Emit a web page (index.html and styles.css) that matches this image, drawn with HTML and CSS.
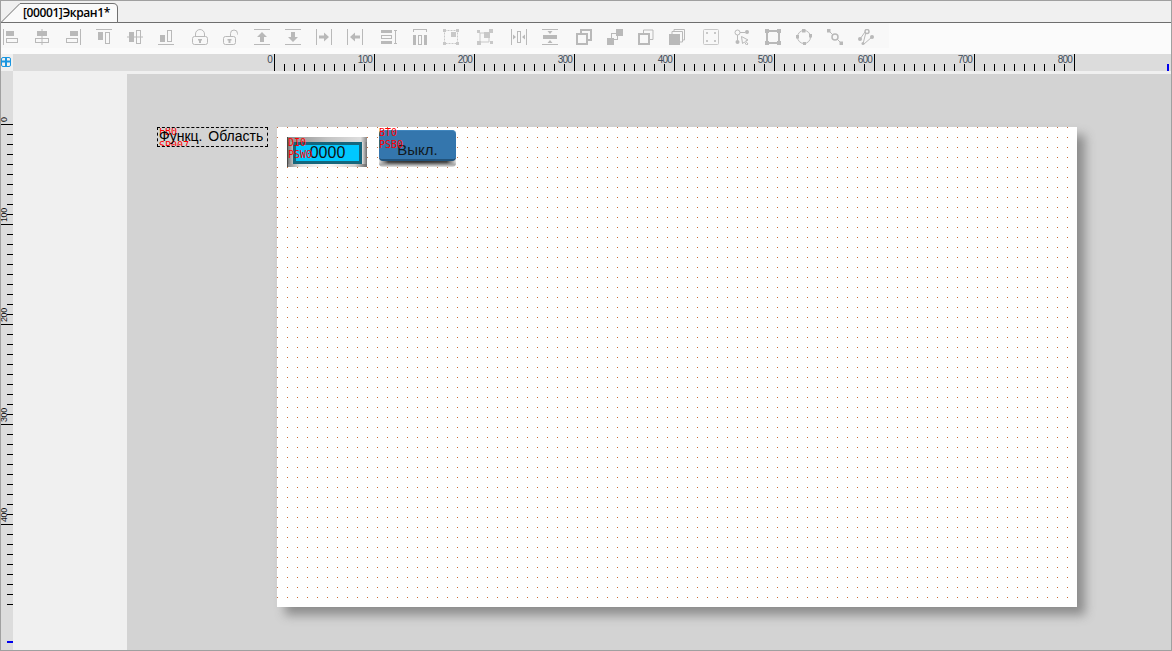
FILE: index.html
```html
<!DOCTYPE html>
<html lang="ru">
<head>
  <meta charset="UTF-8">
  <title>Экран1</title>
  <link rel="stylesheet" href="styles.css">
</head>
<body>

<div class="window">

  <div class="tabbar">
    <div class="tab">
      <svg class="tab-shape" width="118" height="22" viewBox="0 0 118 22">
        <path d="M0 21.5 L19 2.5 H112 Q116.500 2.500 116.500 7 V21.500 H0 Z"/>
      </svg>
      <span class="tab-title">[00001]Экран1*</span>
    </div>
  </div>

  <div class="toolbar">
    <div class="tools">
      <svg class="ico" viewBox="0 0 16 16"><rect x="0" y="0" width="1" height="16"/><rect x="3" y="2" width="8" height="5"/><rect class="ol" x="3.500" y="9.500" width="11" height="4"/></svg>
      <svg class="ico" viewBox="0 0 16 16"><rect x="7.500" y="0" width="1" height="16"/><rect x="3" y="2" width="10" height="5"/><rect class="ol" x="1.500" y="9.500" width="13" height="4"/></svg>
      <svg class="ico" viewBox="0 0 16 16"><rect x="15" y="0" width="1" height="16"/><rect x="5" y="2" width="8" height="5"/><rect class="ol" x="1.500" y="9.500" width="11" height="4"/></svg>
      <svg class="ico" viewBox="0 0 16 16"><rect x="0" y="0" width="16" height="1"/><rect x="2" y="3" width="5" height="8"/><rect class="ol" x="9.500" y="3.500" width="4" height="11"/></svg>
      <svg class="ico" viewBox="0 0 16 16"><rect x="0" y="7.500" width="16" height="1"/><rect x="2" y="3" width="5" height="10"/><rect class="ol" x="9.500" y="1.500" width="4" height="13"/></svg>
      <svg class="ico" viewBox="0 0 16 16"><rect x="0" y="15" width="16" height="1"/><rect x="2" y="6" width="5" height="7"/><rect class="ol" x="9.500" y="1.500" width="4" height="11"/></svg>

      <svg class="ico sep" viewBox="0 0 16 16"><rect class="ol" x="0.500" y="7.500" width="15" height="8" rx="2"/><path class="ol" d="M3.500 7.500 V5 A4.500 4.500 0 0 1 12.500 5 V7.500"/><rect x="7" y="10" width="2" height="4"/><rect x="6" y="10" width="4" height="1.500"/></svg>
      <svg class="ico" viewBox="0 0 16 16"><rect class="ol" x="0.500" y="7.500" width="12" height="8" rx="2"/><path class="ol" d="M7.500 7.500 V4.500 A3.500 3.500 0 0 1 14.500 4.500 V5.500"/><rect x="5.500" y="10" width="2" height="4"/><rect x="4.500" y="10" width="4" height="1.500"/></svg>
      <svg class="ico" viewBox="0 0 16 16"><rect x="0" y="0" width="16" height="1"/><rect x="0" y="15" width="16" height="1"/><path d="M8 3 L13 8 H10 V13 H6 V8 H3 Z"/></svg>
      <svg class="ico" viewBox="0 0 16 16"><rect x="0" y="0" width="16" height="1"/><rect x="0" y="15" width="16" height="1"/><path d="M8 13 L3 8 H6 V3 H10 V8 H13 Z"/></svg>
      <svg class="ico" viewBox="0 0 16 16"><rect x="0" y="0" width="1" height="16"/><rect x="15" y="0" width="1" height="16"/><path d="M13 8 L8 3.500 V6.500 H3 V9.500 H8 V12.500 Z"/></svg>
      <svg class="ico" viewBox="0 0 16 16"><rect x="0" y="0" width="1" height="16"/><rect x="15" y="0" width="1" height="16"/><path d="M3 8 L8 3.500 V6.500 H13 V9.500 H8 V12.500 Z"/></svg>

      <svg class="ico sep" viewBox="0 0 16 16"><rect x="0" y="1" width="11" height="3"/><rect class="ol" x="0.500" y="6.500" width="10" height="3"/><rect x="0" y="12" width="11" height="3"/><path d="M13 1 H16 V2 H15 V14 H16 V15 H13 V14 H14 V2 H13 Z"/></svg>
      <svg class="ico" viewBox="0 0 16 16"><path d="M1 0 V3 H2 V1 H14 V3 H15 V0 Z"/><rect x="1" y="6" width="3" height="10"/><rect class="ol" x="6.500" y="6.500" width="3" height="9"/><rect x="12" y="6" width="3" height="10"/></svg>
      <svg class="ico faint" viewBox="0 0 16 16"><rect class="ol dash" x="1.500" y="1.500" width="13" height="13"/><rect x="8" y="3" width="5" height="5"/><rect x="0" y="0" width="3" height="3"/><rect x="13" y="0" width="3" height="3"/><rect x="0" y="13" width="3" height="3"/><rect x="13" y="13" width="3" height="3"/></svg>

      <svg class="ico sep faint" viewBox="0 0 16 16"><path class="ol" d="M3 4 H12 V13 H3 Z"/><rect x="7" y="3" width="6" height="6"/><rect x="0" y="12" width="4" height="4"/><rect x="12" y="0" width="4" height="4"/><rect x="0" y="1" width="3" height="3"/><rect x="13" y="12" width="3" height="3"/></svg>
      <svg class="ico sep" viewBox="0 0 16 16"><rect x="0" y="0" width="1" height="16"/><rect x="15" y="0" width="1" height="16"/><rect class="ol" x="6.500" y="2.500" width="3" height="11"/><path d="M5 8 L2 5.500 V10.500 Z M11 8 L14 5.500 V10.500 Z"/></svg>
      <svg class="ico" viewBox="0 0 16 16"><rect x="0" y="0" width="16" height="1"/><rect x="0" y="15" width="16" height="1"/><rect x="1" y="6" width="14" height="4"/><path d="M8 5 L5.500 2 H10.500 Z M8 11 L5.500 14 H10.500 Z"/></svg>

      <svg class="ico sep" viewBox="0 0 16 16"><path class="ol2" d="M5 5 V1 H15 V11 H11"/><rect class="ol2" x="1" y="5" width="10" height="10"/></svg>
      <svg class="ico" viewBox="0 0 16 16"><rect x="9" y="0" width="7" height="7"/><rect class="ol" x="4.500" y="4.500" width="6" height="6"/><rect x="0" y="9" width="7" height="7"/></svg>
      <svg class="ico" viewBox="0 0 16 16"><path class="ol" d="M5.500 4 V1 H15 V10.500 H12"/><rect class="ol2" x="1" y="5" width="10" height="10"/></svg>
      <svg class="ico" viewBox="0 0 16 16"><path class="ol" d="M5 3 V0.500 H15.500 V11 H13"/><path class="ol" d="M3 5 V2.500 H13.500 V13 H11"/><rect x="0" y="5" width="11" height="11"/></svg>

      <svg class="ico sep faint" viewBox="0 0 16 16"><rect class="ol" x="0.500" y="0.500" width="15" height="15" rx="1"/><rect x="3" y="3" width="2" height="2"/><rect x="11" y="3" width="2" height="2"/><rect x="3" y="11" width="2" height="2"/><rect x="11" y="11" width="2" height="2"/></svg>
      <svg class="ico" viewBox="0 0 16 16"><circle class="ol" cx="3.500" cy="3.500" r="2.500"/><circle cx="13" cy="3" r="2"/><path class="ol" d="M6 3.500 H11 M3.500 6 V11"/><circle cx="3.500" cy="13" r="2"/><path class="ol" d="M7.500 7.500 L14 11 L11.500 12 L14 15 L12.500 16 L10.500 13 L8.500 14.500 Z"/></svg>
      <svg class="ico" viewBox="0 0 16 16"><rect class="ol2" x="2" y="2" width="12" height="12"/><rect x="0" y="0" width="4" height="4"/><rect x="12" y="0" width="4" height="4"/><rect x="0" y="12" width="4" height="4"/><rect x="12" y="12" width="4" height="4"/></svg>
      <svg class="ico" viewBox="0 0 16 16"><circle class="ol" cx="8" cy="8" r="6.500"/><rect x="6" y="0" width="3.500" height="3.500"/><rect x="13" y="5" width="3" height="3.500"/><rect x="0" y="6" width="3" height="3.500"/><rect x="7" y="13" width="3" height="3"/></svg>
      <svg class="ico" viewBox="0 0 16 16"><path class="ol" d="M1 1 L15 15"/><circle class="ol3" cx="8" cy="8" r="3"/><rect x="0" y="0" width="3.500" height="3.500"/><rect x="12.500" y="12.500" width="3.500" height="3.500"/></svg>
      <svg class="ico" viewBox="0 0 16 16"><path class="ol" d="M2 10 L7 3 M14 8 L6 15 M8 3 L5 15"/><circle class="ol3" cx="9" cy="2.500" r="2"/><circle cx="2" cy="10" r="2"/><circle cx="14" cy="8" r="2"/><circle cx="5" cy="14.500" r="1.500"/></svg>
    </div>
  </div>

  <div class="hruler-row">
    <div class="corner">
      <svg class="corner-mark" width="10" height="10" viewBox="0 0 10 10"><path d="M0.500 2 Q0.500 0.500 2 0.500 H8 Q9.500 0.500 9.500 2 V8 Q9.500 9.500 8 9.500 H2 Q0.500 9.500 0.500 8 Z"/><path class="corner-bar" d="M0 4.500 H10 M5 0 V10"/></svg>
    </div>
    <div class="hruler">
      <div class="htrack">
        <div class="hlabels">
          <span>0</span><span>100</span><span>200</span><span>300</span><span>400</span><span>500</span><span>600</span><span>700</span><span>800</span>
        </div>
      </div>
      <i class="hmark"></i>
    </div>
  </div>

  <div class="workspace">
    <div class="vruler">
      <div class="vtrack">
        <div class="vlabels">
          <span>0</span><span>100</span><span>200</span><span>300</span><span>400</span>
        </div>
      </div>
      <i class="vmark"></i>
    </div>

    <div class="stage">
      <div class="func-area">
        <div class="tag-lines">FB0<br>SP007</div>
        <span>Функц. Область</span>
      </div>

      <div class="page">
        <div class="num-box">
          <div class="num-field">0000</div>
          <div class="tag-lines">DI0<br>PSW0</div>
        </div>

        <div class="btn-box">
          <div class="btn-face">Выкл.</div>
          <div class="btn-base"></div>
          <div class="tag-lines">BT0<br>PSB0</div>
        </div>
      </div>
    </div>
  </div>

</div>

</body>
</html>
```

FILE: styles.css
```css
* {
  box-sizing: border-box;
}

html, body {
  margin: 0;
  height: 100%;
  overflow: hidden;
}

body {
  font-family: 'Liberation Sans', Arial, sans-serif;
  background: #f0f0f0;
}

.window {
  display: flex;
  flex-direction: column;
  width: 1172px;
  height: 651px;
  border: 1px solid #a0a0a0;
  background: #f0f0f0;
}

/* tabs */
.tabbar {
  height: 22px;
  border-bottom: 1px solid #6e6e6e;
  background: #f0f0f0;
}

.tab {
  position: relative;
  width: 118px;
  height: 22px;
  padding: 5px 0 0 22px;
  font-family: 'Open Sans', sans-serif;
  font-size: 12px;
  font-weight: 600;
  line-height: 14px;
  color: #000;
}

.tab-shape {
  position: absolute;
  top: 0;
  left: 0;
}

.tab-shape path {
  fill: #fafafa;
  stroke: #707070;
  stroke-width: 1;
}

.tab-title {
  position: relative;
  letter-spacing: -0.4px;
}

/* toolbar */
.toolbar {
  height: 31px;
  background: #fbfbfb;
}

.tools {
  display: flex;
  align-items: flex-start;
  gap: 15px;
  width: 888px;
  height: 25px;
  padding: 6px 0 0 2px;
  background: #f8f8f8;
}

.ico {
  flex: none;
  width: 16px;
  height: 16px;
  fill: #b9b9b9;
}

.ico.faint {
  opacity: 0.75;
}

.ico.sep {
  margin-left: 3px;
}

.ol, .ol2, .ol3 {
  fill: none;
  stroke: #b9b9b9;
  stroke-width: 1;
}

.ol2 {
  stroke-width: 2;
}

.ol3 {
  fill: #f8f8f8;
  stroke-width: 1.500;
}

.dash {
  stroke-dasharray: 2 1;
}

/* rulers */
.hruler-row {
  display: flex;
  height: 17px;
}

.corner {
  flex: none;
  width: 12px;
  padding-top: 3px;
  background: #f0f0f0;
}

.corner-mark {
  display: block;
  fill: none;
  stroke: #1a96e0;
  stroke-width: 1;
}

.corner-bar {
  stroke-width: 2;
}

.hruler {
  position: relative;
  flex: 1;
  padding-left: 261px;
  background: #dcdcdc;
}

.htrack {
  width: 801px;
  height: 17px;
  background-image:
    linear-gradient(to right, #000 1px, transparent 1px),
    linear-gradient(to right, #000 1px, transparent 1px);
  background-size: 100px 17px, 10px 7px;
  background-position: 0 0, 0 100%;
  background-repeat: repeat-x;
}

.hlabels {
  display: flex;
  margin-left: -100px;
}

.hlabels span {
  flex: none;
  width: 100px;
  padding-right: 2px;
  font-size: 10px;
  line-height: 12px;
  letter-spacing: -0.8px;
  text-align: right;
  color: #3d4a58;
}

.hmark {
  position: absolute;
  right: 2px;
  bottom: 0;
  width: 2px;
  height: 7px;
  background: #0000ee;
}

.workspace {
  display: flex;
  flex: 1;
  min-height: 0;
}

.vruler {
  position: relative;
  flex: none;
  width: 12px;
  padding-top: 53px;
  background: #dcdcdc;
}

.vtrack {
  display: flow-root;
  width: 12px;
  height: 481px;
  background-image:
    linear-gradient(to bottom, #000 1px, transparent 1px),
    linear-gradient(to bottom, #000 1px, transparent 1px);
  background-size: 12px 100px, 6px 10px;
  background-position: 0 0, 100% 0;
  background-repeat: repeat-y;
}

.vlabels {
  display: flex;
  flex-direction: column;
  margin-top: -100px;
}

.vlabels span {
  flex: none;
  height: 100px;
  width: 7px;
  padding-top: 2px;
  font-size: 9px;
  line-height: 6px;
  letter-spacing: -0.4px;
  color: #111;
  writing-mode: vertical-rl;
  transform: rotate(180deg);
}

.vmark {
  position: absolute;
  right: 0;
  bottom: 7px;
  width: 6px;
  height: 2px;
  background: #0000ee;
}

/* drawing area */
.stage {
  position: relative;
  flex: 1;
  margin: 3px 0 0 114px;
  background: #d3d3d3;
}

.page {
  position: absolute;
  top: 53px;
  left: 150px;
  width: 800px;
  height: 480px;
  background-color: #fff;
  background-image:
    linear-gradient(to right, transparent 1px, #fff 1px),
    linear-gradient(to bottom, #c8703c 1px, #fff 1px);
  background-size: 10px 10px;
  box-shadow: 8px 8px 10px #8c8c8c;
}

.tag-lines {
  position: absolute;
  top: 0;
  left: 0;
  font-family: 'DejaVu Sans Mono', monospace;
  font-size: 10px;
  line-height: 12px;
  color: #ff0000;
}

.func-area {
  position: absolute;
  top: 53px;
  left: 30px;
  width: 111px;
  height: 20px;
  padding-left: 1px;
  overflow: hidden;
  border: 1px dashed #000;
  font-size: 14px;
  line-height: 17px;
  white-space: nowrap;
  color: #000;
}

.func-area .tag-lines {
  top: -3px;
  left: 1px;
  line-height: 14px;
}

.func-area span {
  position: relative;
  word-spacing: 2px;
}

.num-box {
  position: absolute;
  top: 10px;
  left: 10px;
  width: 80px;
  height: 30px;
  padding: 5px 5px 3px 5px;
  border-left: 1px solid #4a4a4a;
  background:
    linear-gradient(to right, #8a8a8a, #dcdcdc 15%, #fafafa 50%, #cfcfcf 85%, #6a6a6a) 0 100% / 100% 3px no-repeat,
    linear-gradient(to right, #8c8c8c, #c4c4c4 50%, #dedede 92%, #888) 0 0 / 100% 5px no-repeat,
    linear-gradient(to right, #e4e4e4, #6e6e6e) 100% 0 / 5px 100% no-repeat,
    linear-gradient(to right, #777, #c0c0c0) 0 0 / 5px 100% no-repeat,
    #a8a8a8;
}

.num-field {
  height: 22px;
  border: 3px solid #15667c;
  background: #00c8ff;
  font-size: 16px;
  line-height: 16px;
  text-align: center;
  color: #111;
}

.btn-box {
  position: absolute;
  top: 3px;
  left: 102px;
  width: 77px;
  height: 37px;
}

.btn-box .tag-lines {
  top: -3px;
}

.btn-face {
  position: relative;
  height: 31px;
  border-radius: 4px;
  border-top: 1px solid #4186bd;
  border-bottom: 2px solid #21527a;
  background: #3476ad;
  font-size: 15px;
  line-height: 37px;
  text-align: center;
  color: #101820;
}

.btn-base {
  height: 9px;
  margin-top: -3px;
  border-radius: 0 0 4px 4px;
  background:
    linear-gradient(to bottom, transparent 4px, #aaa 7px, #e6e6e6 9px),
    linear-gradient(to right, #e4e4e4, #444 12%, #333 50%, #444 88%, #e4e4e4);
}
```
